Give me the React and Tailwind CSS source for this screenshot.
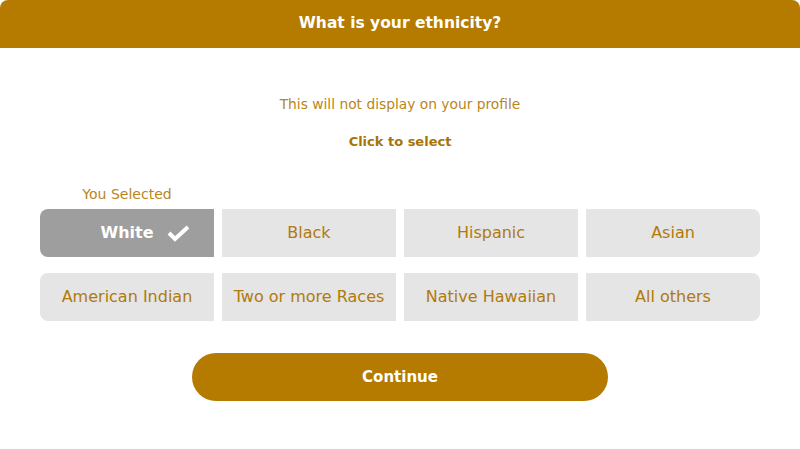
const options = [
  'White',
  'Black',
  'Hispanic',
  'Asian',
  'American Indian',
  'Two or more Races',
  'Native Hawaiian',
  'All others',
]

const corner = [
  'rounded-l-lg',
  '',
  '',
  'rounded-r-lg',
  'rounded-l-lg',
  '',
  '',
  'rounded-r-lg',
]

function CheckMark() {
  return (
    <svg
      className="absolute left-[126px] top-[15px]"
      width="26"
      height="20"
      viewBox="0 0 26 20"
      fill="none"
      stroke="white"
      strokeWidth="4"
      strokeLinejoin="miter"
    >
      <polyline points="3,9 9,15 22,3" />
    </svg>
  )
}

export default function App() {
  const selected = 'White'

  return (
    <div className="w-[800px] h-[449px] bg-white font-['DejaVu_Sans',sans-serif]">
      <div className="h-12 bg-[#b47b00] rounded-t-lg flex items-center justify-center">
        <h1 className="text-white font-bold text-[15.5px]">What is your ethnicity?</h1>
      </div>

      <p className="mt-[48px] text-center text-[13.8px] text-[#b8861b] leading-4">
        This will not display on your profile
      </p>
      <p className="mt-[22px] text-center text-[13px] font-semibold text-[#a87406] leading-4">
        Click to select
      </p>

      <div className="mx-10 mt-[36px]">
        <div className="w-[174px] text-center text-[14px] text-[#b8861b] leading-4">You Selected</div>
        <div className="mt-[7px] grid grid-cols-4 gap-x-2 gap-y-4">
          {options.map((opt, i) => {
            const active = opt === selected
            return (
              <button
                key={opt}
                className={`relative h-12 flex items-center justify-center text-[16px] ${corner[i]} ${
                  active ? 'bg-[#9e9e9e] text-white font-bold' : 'bg-[#e5e5e5] text-[#b07a0c]'
                }`}
              >
                {opt}
                {active && <CheckMark />}
              </button>
            )
          })}
        </div>
      </div>

      <div className="flex justify-center mt-8">
        <button className="w-[416px] h-12 rounded-full bg-[#b47b00] text-white font-bold text-[15px]">
          Continue
        </button>
      </div>
    </div>
  )
}
